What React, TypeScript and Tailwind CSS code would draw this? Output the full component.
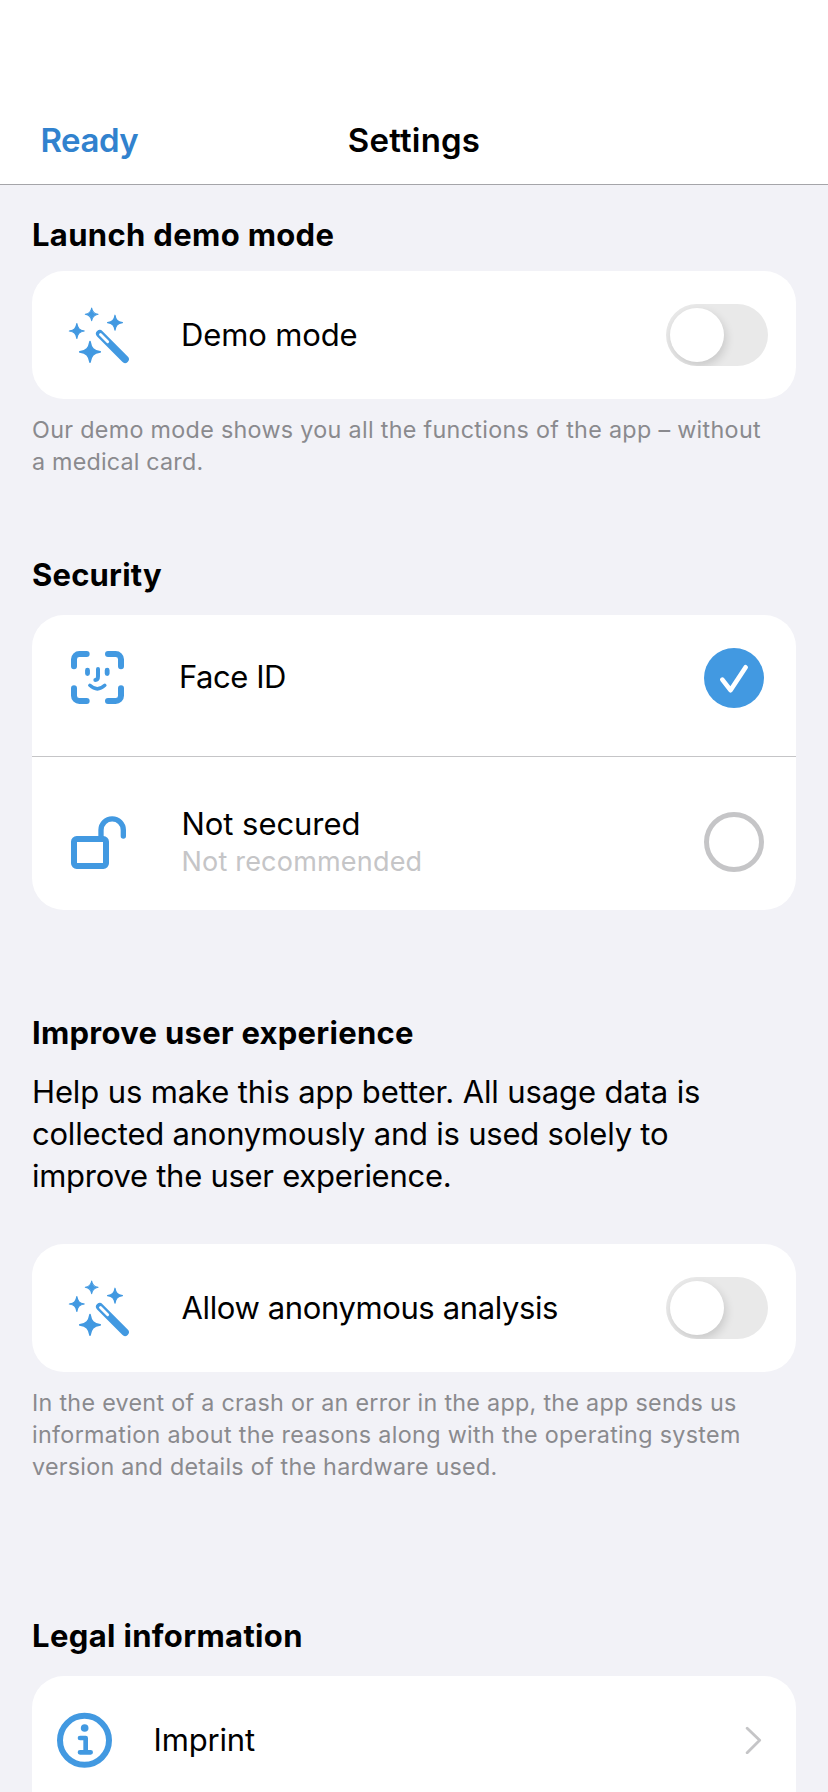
import type { ReactNode } from "react";

const STAR =
  "M0-.93C.1-.32 .32-.1 .93 0C.32 .1 .1 .32 0 .93C-.1 .32-.32 .1-.93 0C-.32-.1-.1-.32 0-.93Z";

const STARS = [
  { x: 95, y: 58, r: 20.5 },
  { x: 165, y: 83, r: 24 },
  { x: 50.5, y: 108, r: 24 },
  { x: 90, y: 170.5, r: 33 },
];

function WandIcon() {
  return (
    <svg viewBox="0 0 240 240" className="size-20 shrink-0 text-[#4299e1]" fill="none" stroke="currentColor" strokeLinecap="round">
      {STARS.map((s) => (
        <path
          key={s.x}
          d={STAR}
          transform={`translate(${s.x} ${s.y}) scale(${s.r})`}
          fill="currentColor"
          strokeWidth={0.15}
          strokeLinejoin="round"
        />
      ))}
      <path d="M119.5 116.5L195 192.5" strokeWidth="23" />
      <path d="M121.5 118.5L143 140" stroke="#fff" strokeWidth="8.5" />
    </svg>
  );
}

function FaceIcon() {
  return (
    <svg viewBox="0 0 240 240" className="size-20 shrink-0 text-[#4299e1]" fill="none" stroke="currentColor" strokeLinecap="round">
      <path
        strokeWidth="18"
        d="M42 85V64a16 16 0 0 1 16-16H80M144 48h23a16 16 0 0 1 16 16V85M42 151v22a16 16 0 0 0 16 16H80M144 189h23a16 16 0 0 0 16-16V151"
      />
      <path strokeWidth="14.5" d="M82.500 96.500v10M141.500 96.500v10" />
      <path strokeWidth="12" d="M114 93v22q0 11-8 11" />
      <path strokeWidth="10.500" d="M89.500 142q22.500 21 45 0" />
    </svg>
  );
}

function UnlockIcon() {
  return (
    <svg viewBox="0 0 240 240" className="size-20 shrink-0 text-[#4299e1]" fill="none" stroke="currentColor" strokeLinecap="round">
      <rect x="42" y="111" width="96" height="81" rx="8" strokeWidth="18" />
      <path strokeWidth="16" d="M123 108V84a33.500 33.500 0 0 1 67 0v18" />
    </svg>
  );
}

function InfoIcon() {
  return (
    <svg viewBox="0 0 168 168" className="size-14 shrink-0 text-[#4299e1]" fill="none" stroke="currentColor" strokeLinecap="round" strokeLinejoin="round">
      <circle cx="85.500" cy="85" r="73.500" strokeWidth="18" />
      <circle cx="86" cy="48" r="11.500" fill="currentColor" stroke="none" />
      <path strokeWidth="14" d="M72 78H89V121M72 121h32" />
    </svg>
  );
}

function CheckMark() {
  return (
    <svg viewBox="0 0 180 180" className="size-[60px] rounded-full bg-[#4299e1]" fill="none" stroke="#fff" strokeWidth="14" strokeLinecap="round" strokeLinejoin="round">
      <path d="M55 95L79.500 126.500L125 58" />
    </svg>
  );
}

function Chevron() {
  return (
    <svg viewBox="0 0 60 84" className="ml-auto h-7 w-5" fill="none" stroke="#c5c5c7" strokeWidth="8.5" strokeLinecap="round" strokeLinejoin="round">
      <path d="M9.500 7L47 43L9.500 80" />
    </svg>
  );
}

function Switch() {
  return (
    <button role="switch" aria-checked="false" className="ml-auto h-[62px] w-[102px] overflow-hidden rounded-full bg-[#e9e9e9] p-1">
      <span className="block size-[54px] rounded-full bg-white shadow-[2px_4px_10px_rgba(0,0,0,0.14)]" />
    </button>
  );
}

function Heading({ className, children }: { className: string; children: ReactNode }) {
  return <h2 className={`text-[31px] leading-10 font-bold whitespace-nowrap ${className}`}>{children}</h2>;
}

export default function App() {
  return (
    <div className="flex h-[1792px] w-[828px] flex-col overflow-hidden bg-[#f2f2f7] font-['Inter',sans-serif] text-black">
      <header className="grid grid-cols-3 border-b border-[#a5a5a9] bg-white px-10 pt-[120px] pb-6 text-[33px] leading-10 font-semibold">
        <button className="pl-[0.5px] text-left tracking-[-0.5px] text-[#3182ce]">Ready</button>
        <h1 className="text-center tracking-[0.184px]">Settings</h1>
      </header>

      <main className="flex flex-col px-8 pt-[30px] text-[31px]">
        <section>
          <Heading className="tracking-[0.333px]">Launch demo mode</Heading>
          <div className="mt-4 flex h-32 items-center rounded-[32px] bg-white pr-7 pl-7">
            <WandIcon />
            <span className="ml-[41px] tracking-[-0.141px]">Demo mode</span>
            <Switch />
          </div>
          <p className="mt-[15px] text-[23.3px] leading-8 whitespace-nowrap text-[#8a8a8e]">
            <span className="block tracking-[0.318px]">Our demo mode shows you all the functions of the app – without</span>
            <span className="block tracking-[0.2px]">a medical card.</span>
          </p>
        </section>

        <section className="mt-[77px]">
          <Heading className="tracking-[0.2px]">Security</Heading>
          <div className="mt-5 rounded-[32px] bg-white">
            <div className="flex h-[141px] items-center pr-8 pb-[15px] pl-7">
              <FaceIcon />
              <span className="-mt-px ml-[39px] tracking-[-0.463px]">Face ID</span>
              <span className="ml-auto"><CheckMark /></span>
            </div>
            <div className="flex h-[154px] items-center border-t border-[#c5c5c7] pt-[17px] pr-8 pl-7">
              <UnlockIcon />
              <div className="ml-[41.5px] flex flex-col">
                <span className="leading-[38px] tracking-[-0.051px]">Not secured</span>
                <span className="-mb-px pt-px text-[27px] leading-9 tracking-[0.2px] text-[#c5c5c7]">Not recommended</span>
              </div>
              <span className="ml-auto size-[60px] rounded-full border-[5px] border-[#c5c5c7]" />
            </div>
          </div>
        </section>

        <section className="mt-[103px]">
          <Heading className="tracking-[0.278px]">Improve user experience</Heading>
          <p className="mt-[18px] leading-[42px] whitespace-nowrap">
            <span className="block tracking-[-0.122px]">Help us make this app better. All usage data is</span>
            <span className="block tracking-[-0.219px]">collected anonymously and is used solely to</span>
            <span className="block tracking-[-0.27px]">improve the user experience.</span>
          </p>
          <div className="mt-[47px] flex h-32 items-center rounded-[32px] bg-white pr-7 pl-7">
            <WandIcon />
            <span className="ml-[41.5px] tracking-[-0.38px]">Allow anonymous analysis</span>
            <Switch />
          </div>
          <p className="mt-[15px] text-[23.3px] leading-8 whitespace-nowrap text-[#8a8a8e]">
            <span className="block tracking-[0.292px]">In the event of a crash or an error in the app, the app sends us</span>
            <span className="block tracking-[0.331px]">information about the reasons along with the operating system</span>
            <span className="block tracking-[0.25px]">version and details of the hardware used.</span>
          </p>
        </section>

        <section className="mt-[133px]">
          <Heading className="tracking-[0.35px]">Legal information</Heading>
          <div className="mt-5 rounded-t-[32px] bg-white">
            <div className="flex h-32 items-center pr-8 pl-6">
              <InfoIcon />
              <span className="ml-[41.5px] tracking-[-0.157px]">Imprint</span>
              <Chevron />
            </div>
          </div>
        </section>
      </main>
    </div>
  );
}
